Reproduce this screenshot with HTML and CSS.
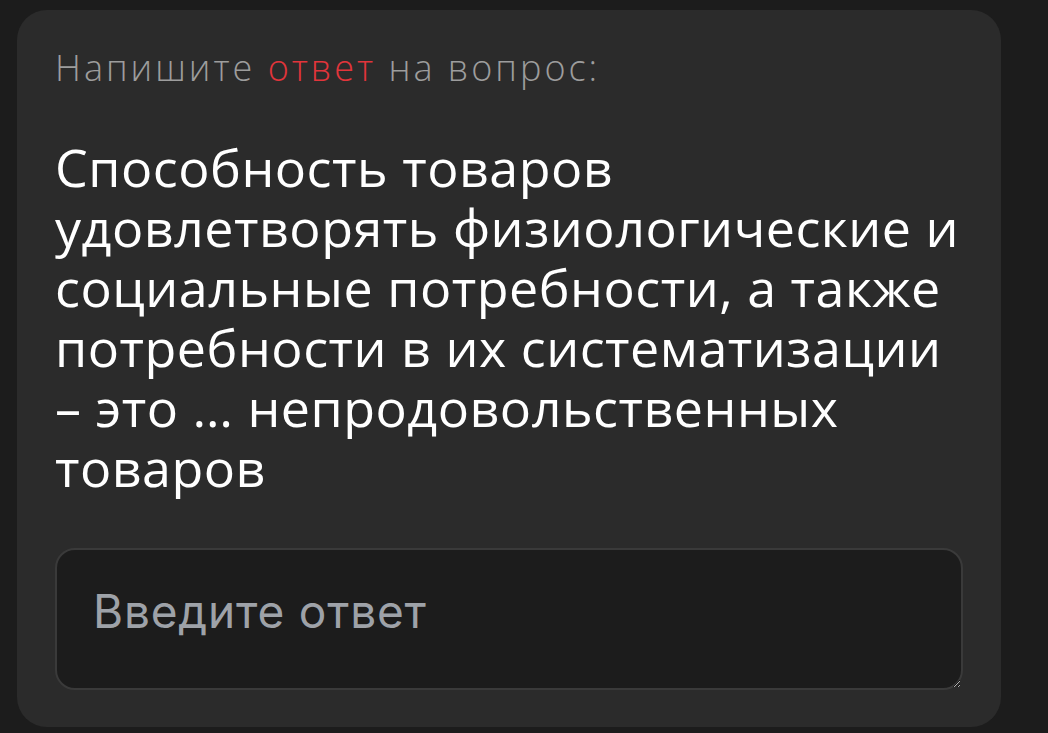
FILE: index.html
```html
<!DOCTYPE html>
<html lang="ru">
<head>
  <meta charset="UTF-8">
  <title>Вопрос</title>
  <link rel="stylesheet" href="styles.css">
</head>
<body>
  <div class="card">
    <div class="prompt">Напишите <span class="accent">ответ</span> на вопрос:</div>
    <div class="question">Способность товаров удовлетворять физиологические и социальные потребности, а также потребности в их систематизации – это … непродовольственных товаров</div>
    <textarea class="answer" placeholder="Введите ответ"></textarea>
  </div>
</body>
</html>
```

FILE: styles.css
```css
html, body {
  height: 100%;
}
body {
  margin: 0;
  background: #1c1c1c;
  font-family: "Open Sans", sans-serif;
  box-sizing: border-box;
  padding: 10px 47px 6px 17px;
}
.card {
  background: #2b2b2b;
  border-radius: 30px;
  padding: 38px 38px 37px 38px;
  height: 100%;
  box-sizing: border-box;
  display: flex;
  flex-direction: column;
}
.prompt {
  font-size: 36px;
  font-weight: 300;
  line-height: 40px;
  letter-spacing: 3px;
  color: #9d9d9d;
}
.accent {
  color: #e2353b;
}
.question {
  margin-top: 49px;
  font-size: 52px;
  line-height: 60px;
  letter-spacing: 0.5px;
  color: #ffffff;
}
.answer {
  margin-top: auto;
  display: block;
  width: 100%;
  height: 142px;
  box-sizing: border-box;
  background: #1c1c1c;
  border: 2px solid #3a3a3a;
  border-radius: 20px;
  padding: 33px 36px;
  font-family: Inter, sans-serif;
  font-size: 46px;
  letter-spacing: 0.8px;
  color: #ffffff;
  outline: none;
}
.answer::placeholder {
  color: #9ea2a8;
}
```
